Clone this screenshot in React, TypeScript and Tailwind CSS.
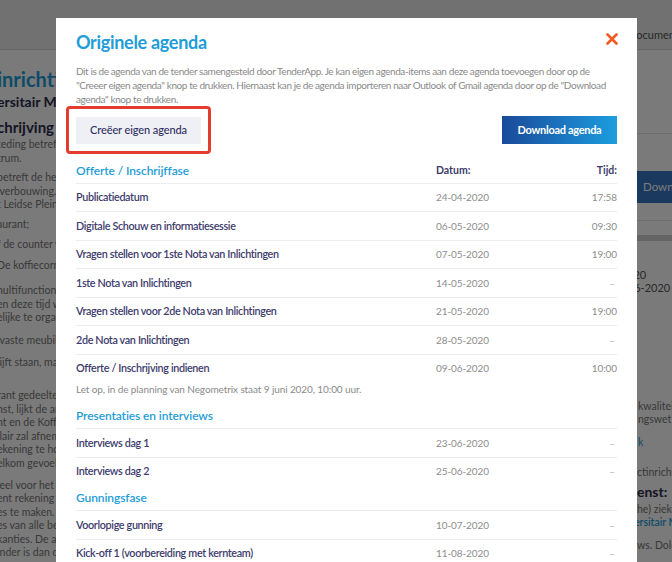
import React from "react";

type Row = { label: string; date: string; time: string };

const section1: Row[] = [
  { label: "Publicatiedatum", date: "24-04-2020", time: "17:58" },
  { label: "Digitale Schouw en informatiesessie", date: "06-05-2020", time: "09:30" },
  { label: "Vragen stellen voor 1ste Nota van Inlichtingen", date: "07-05-2020", time: "19:00" },
  { label: "1ste Nota van Inlichtingen", date: "14-05-2020", time: "–" },
  { label: "Vragen stellen voor 2de Nota van Inlichtingen", date: "21-05-2020", time: "19:00" },
  { label: "2de Nota van Inlichtingen", date: "28-05-2020", time: "–" },
  { label: "Offerte / Inschrijving indienen", date: "09-06-2020", time: "10:00" },
];

const section2: Row[] = [
  { label: "Interviews dag 1", date: "23-06-2020", time: "–" },
  { label: "Interviews dag 2", date: "25-06-2020", time: "–" },
];

const section3: Row[] = [
  { label: "Voorlopige gunning", date: "10-07-2020", time: "–" },
  { label: "Kick-off 1 (voorbereiding met kernteam)", date: "11-08-2020", time: "–" },
];

function AgendaRow({ row }: { row: Row }) {
  return (
    <div className="grid grid-cols-[360px_1fr_auto] items-center h-[28.5px] border-t border-[#ececec]">
      <div className="text-[10.8px] font-semibold text-[#3d3b6c] tracking-[-0.35px] whitespace-nowrap">{row.label}</div>
      <div className="text-[10px] text-[#8d8d8d] tracking-[-0.1px]">{row.date}</div>
      <div className={row.time === "–" ? "text-[10px] text-[#b0b0b0] pr-[2px]" : "text-[10px] text-[#8d8d8d] tracking-[-0.1px]"}>{row.time}</div>
    </div>
  );
}

function SectionHeading({ title, cols, className }: { title: string; cols?: boolean; className: string }) {
  return (
    <div className={"grid grid-cols-[360px_1fr_auto] items-center h-[24px] " + className}>
      <div className="text-[12px] font-semibold text-[#1e9dd8] tracking-[-0.1px]">{title}</div>
      {cols ? <div className="text-[10.5px] font-bold text-[#3d3b6c]">Datum:</div> : <div />}
      {cols ? <div className="text-[10.5px] font-bold text-[#3d3b6c]">Tijd:</div> : <div />}
    </div>
  );
}

type Para = { mt: string; lines: string[] };

const leftParas: Para[] = [
  { mt: "mt-[1px]", lines: ["teding betreft de inrichting", "trum."] },
  { mt: "mt-[6px]", lines: ["betreft de herinrichting", " verbouwing. Het gebouw", "t Leidse Plein 2 te"] },
  { mt: "mt-[6.5px]", lines: ["aurant;"] },
  { mt: "mt-[6.5px]", lines: ["f de counter van het"] },
  { mt: "mt-[7.5px]", lines: ["De koffiecorner wordt"] },
  { mt: "mt-[11.5px]", lines: ["nultifunctionele ruimte", "en deze tijd wordt", "elijke te organiseren"] },
  { mt: "mt-[9.5px]", lines: ["lvaste meubilair"] },
  { mt: "mt-[8.5px]", lines: ["lijft staan, maar"] },
  { mt: "mt-[19.5px]", lines: ["rant gedeelte van", "nst, lijkt de andere", "nt en de Koffiecorner", "ilair zal afnemen", "ekening te houden", "elkom gevoel geven"] },
  { mt: "mt-[8.5px]", lines: ["ieel voor het Leidse", "ent rekening te", "es te maken.", "es van alle betrokken", "kanties. De achterliggende", "inder is dan dat"] },
];

export default function App() {
  return (
    <div className="relative w-[672px] h-[562px] overflow-hidden bg-white font-['Lato',sans-serif]">
      {/* background page */}
      <div className="flex flex-col h-full">
        <div className="h-[50px] shrink-0 bg-[#ececec] border-b border-[#d6d6d6] flex">
          <div className="w-[630px] shrink-0" />
          <div className="pt-[27px] -ml-[2px] text-[11px] text-[#555] whitespace-nowrap">Documenten</div>
        </div>
        <div className="flex flex-1 min-h-0">
          <div className="w-[630px] shrink-0 overflow-hidden">
            <div className="-ml-[3px]">
              <div className="mt-[17px] text-[20px] leading-[24px] font-bold text-[#1e9dd8] whitespace-nowrap">inrichting</div>
              <div className="mt-[2px] text-[14px] leading-[18px] font-bold text-[#2e2d4d] whitespace-nowrap">ersitair Medisch</div>
              <div className="mt-[6px] text-[15px] leading-[20px] font-bold text-[#2e2d4d] whitespace-nowrap">chrijving</div>
              {leftParas.map((p, i) => (
                <div key={i} className={p.mt}>
                  {p.lines.map((l, j) => (
                    <div key={j} className="text-[10.5px] leading-[13.5px] text-[#777] whitespace-pre">{l}</div>
                  ))}
                </div>
              ))}
            </div>
          </div>
          <div className="w-[300px] shrink-0 flex flex-col">
            <div className="h-[84px] border-b border-[#e2e2e2]" />
            <div className="mt-[37px] h-[32px] bg-[#3a78c4] flex items-center pl-[13px] text-[11.5px] text-white whitespace-nowrap">Download agenda</div>
            <div className="mt-[17px] border-t border-[#e6e6e6]" />
            <div className="mt-[14px] h-[6px] bg-[#d2d2d2]" />
            <div className="mt-[27px] -ml-[43px] text-[11px] leading-[13px] text-[#555]">24-04-2020</div>
            <div className="-ml-[19px] text-[11px] leading-[13px] text-[#555]">09-06-2020</div>
            <div className="mt-[106px] pl-[8px] text-[10.5px] leading-[13px] text-[#777] whitespace-nowrap">kwaliteitsborging</div>
            <div className="pl-[8px] text-[10.5px] leading-[13px] text-[#777] whitespace-nowrap">ngswet 2012</div>
            <div className="mt-[10px] pl-[8px] text-[10.5px] leading-[13px] text-[#1e9dd8] whitespace-nowrap">k</div>
            <div className="mt-[17px] pl-[7px] text-[10.5px] leading-[13px] text-[#777] whitespace-nowrap">ctinrichting</div>
            <div className="mt-[4px] pl-[7px] text-[14px] leading-[18px] font-bold text-[#2e2d4d] whitespace-nowrap">enst:</div>
            <div className="mt-[2px] pl-[7px] text-[10.5px] leading-[13px] text-[#777] whitespace-nowrap">he) ziekenhuis</div>
            <div className="pl-[4px] text-[10.5px] leading-[13px] text-[#1e9dd8] font-semibold whitespace-nowrap">ersitair Medisch</div>
            <div className="mt-[10px] pl-[7px] text-[10.5px] leading-[13px] text-[#777] whitespace-nowrap">ws. Dolor</div>
          </div>
        </div>
      </div>

      {/* overlay */}
      <div className="absolute inset-0 bg-black/[0.52]" />

      {/* modal */}
      <div className="absolute left-[56px] top-[18px] w-[581px] h-[620px] bg-white px-[20px] pt-[12px]">
        <div className="flex items-center justify-between h-[24px]">
          <h1 className="text-[18px] leading-[24px] font-bold text-[#1e9dd8] tracking-[-0.3px]">Originele agenda</h1>
          <svg width="12" height="12" viewBox="0 0 12 12" className="-mt-[7px] mr-[-1px]">
            <path d="M1.5 1.5L10.5 10.5M10.5 1.5L1.5 10.5" stroke="#f15a24" strokeWidth="2.6" strokeLinecap="round" />
          </svg>
        </div>
        <div className="mt-[10px] text-[10px] leading-[14px] text-[#8a8a8a] tracking-[-0.4px] whitespace-nowrap">
          <div>Dit is de agenda van de tender samengesteld door TenderApp. Je kan eigen agenda-items aan deze agenda toevoegen door op de</div>
          <div>"Creeer eigen agenda" knop te drukken. Hiernaast kan je de agenda importeren naar Outlook of Gmail agenda door op de "Download</div>
          <div>agenda" knop te drukken.</div>
        </div>
        <div className="flex items-center justify-between">
          <div className="-ml-[10px] border-[3px] border-[#e43d30] rounded-[4px] p-[7px]">
            <button className="w-[125px] h-[27px] bg-[#eef0f6] text-[11px] text-[#2f2f5e] tracking-[-0.1px] font-medium">Creëer eigen agenda</button>
          </div>
          <button className="w-[115px] h-[28px] bg-linear-to-r from-[#1a4a9a] to-[#1c9ddf] text-[11px] font-bold text-white tracking-[-0.3px]">Download agenda</button>
        </div>

        <SectionHeading title="Offerte / Inschrijffase" cols className="mt-[5px]" />
        {section1.map((r) => (
          <AgendaRow key={r.label} row={r} />
        ))}
        <div className="text-[10px] leading-[15px] text-[#8a8a8a] tracking-[-0.1px]">Let op, in de planning van Negometrix staat 9 juni 2020, 10:00 uur.</div>

        <SectionHeading title="Presentaties en interviews" className="mt-[7px]" />
        {section2.map((r) => (
          <AgendaRow key={r.label} row={r} />
        ))}

        <SectionHeading title="Gunningsfase" className="mt-[1px]" />
        {section3.map((r) => (
          <AgendaRow key={r.label} row={r} />
        ))}
      </div>
    </div>
  );
}
